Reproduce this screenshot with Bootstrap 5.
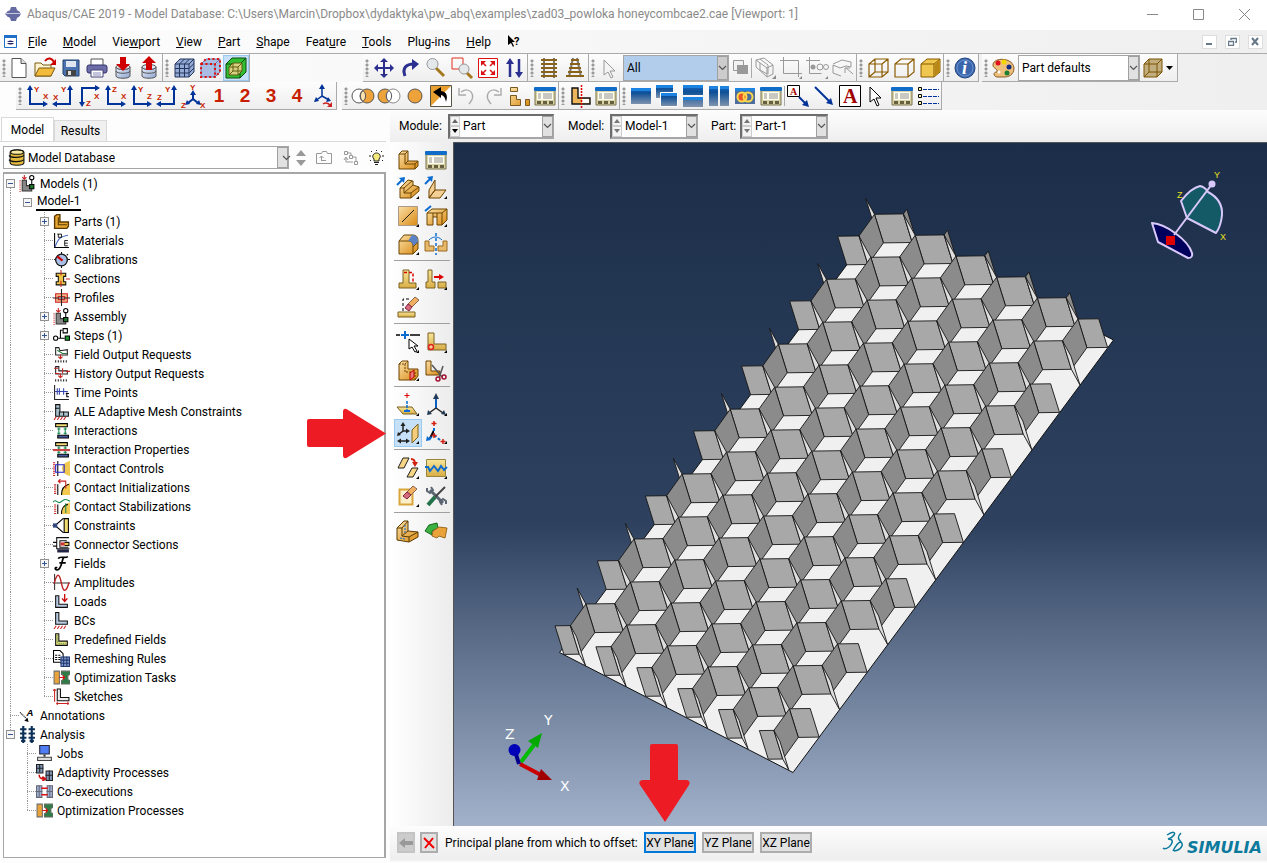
<!DOCTYPE html>
<html lang="en">
<head>
<meta charset="utf-8">
<meta name="viewport" content="width=device-width, initial-scale=1">
<title>Abaqus/CAE 2019</title>
<link rel="stylesheet" href="https://cdn.jsdelivr.net/npm/bootstrap@5.3.0/dist/css/bootstrap.min.css">
<style>
body{font:12px/16px Roboto,"Open Sans",sans-serif;color:#000;background:#fdfdfd;min-height:100vh}
button,select{font:inherit;color:inherit;padding:0;border-radius:0}
svg{display:block;flex:none}
.ui-title{height:30px;background:#fff;color:#8a8a8a;padding-bottom:2px}
.ui-title .cap{margin-left:-3px}
.ui-title button,.mdi button{border:0;background:none}
.win{width:46px;height:28px;display:grid;place-items:center}
.ui-menu{height:24px;background:linear-gradient(90deg,#fdfdfd,#efefef);border-bottom:1px solid #aaa}
.ui-menu .docicon{margin-right:11px}
.ui-menu a{color:#000;text-decoration:none}
.menus{gap:16px}
.mdi button{width:15px;height:14px;background:#fff;border:1px solid #ddd;display:grid;place-items:center}
.bars{background:linear-gradient(90deg,#fdfdfd,#efefef)}
.bar-row{height:28px}
.tgroup{height:28px;display:flex;align-items:center;border-right:1px solid #aaa;border-bottom:1px solid #aaa;background:linear-gradient(#fdfdfd,#eee);flex:none}
.gapl{margin-left:113px}
.gaps{margin-left:3px}
.gapm{margin-left:5px}
.grip{width:8px;height:18px;flex:none;background:radial-gradient(circle at 4px 2px,#999 1px,transparent 2px) 0 0/8px 4px}
.grip.thin{width:6px}
.tb{width:26px;height:26px;border:0;background:none;display:grid;place-items:center;flex:none}
.tb svg{width:24px;height:24px;overflow:visible}
.nar{width:22px}
.tb.on{background:#c6e0f7;outline:1px solid #99c9ef;outline-offset:-1px}
.num{font:bold 19px/24px "Liberation Sans",sans-serif;color:#c81e00}
.ax text{font:bold 8px "Liberation Sans",sans-serif;fill:#c81e00}
.vsep{width:1px;height:20px;background:#aaa;flex:none}
.pick{position:relative;display:flex;align-items:stretch;height:25px;background:#fff;border:2px solid #a6a6a6;border-right-width:1px}
.pick select{appearance:none;border:0;background:none;flex:1;min-width:0;outline:0;padding-left:3px}
.pick .drop{width:11px;background:#e1e1e1;border:1px solid #a0a0a0;display:grid;place-items:center;pointer-events:none}
.pick .spin{width:10px;display:flex;flex-direction:column}
.spin button{flex:1;border:1px solid #ccc;background:#f4f4f4;display:grid;place-items:center}
.inset{border-color:#6d6d6d #a6a6a6 #a6a6a6 #6d6d6d}
.pick.allpick{width:106px;background:#b1cdeb;height:26px;border-width:1px}
.allpick .drop{background:#ccc}
.pick.colpick{width:122px;margin-left:2px;height:26px;border-width:1px}
.pick.dbpick{width:286px;height:23px;border-width:1px}
.dbpick svg{width:17px}
.dbtools{padding:0 2px 0 7px}
.p1{width:106px}
.p2{width:88px}
.ml1{width:49px}
.ml2{width:42px;margin-left:14px}
.ml3{width:29px;margin-left:13px}
.side{width:386px;flex:none}
.tabs{padding:7px 0 0 1px}
.tabs button{border:1px solid #d9d9d9;border-bottom:0;background:#f0f0f0;height:21px;width:53px}
.tabs button.cur{background:#fff;height:24px}
.panel{border-top:1px solid #d9d9d9;padding:4px 0 0 3px}
.tree{border:1px solid #a6a6a6;border-width:2px 2px 1px 1px;background:#fff;margin:3px 0 5px}
.tree ul{list-style:none;margin:0;padding:0}
.tree li{height:19px;display:flex;align-items:center}
.tree li>svg{width:17px;height:17px;margin-right:4px;overflow:visible}
.c{width:17px;height:19px;flex:none;--lx:8px;display:flex;align-items:center;padding-left:4px;background-repeat:no-repeat}
.c:first-child{width:15px;--lx:6px;padding-left:2px}
.v{background-image:repeating-linear-gradient(#999 0 1px,transparent 1px 2px);background-size:1px 100%;background-position:var(--lx) 0}
.v.up{background-size:1px 10px}
.v.dn{background-size:1px 10px;background-position:var(--lx) 10px}
.k::after{content:"";height:1px;flex:1;margin-left:4px;background:repeating-linear-gradient(90deg,#999 0 1px,transparent 1px 2px)}
.pm{width:9px;height:9px;border:1px solid #919191;background:linear-gradient(#36548f,#36548f) 50% 50%/5px 1px no-repeat #f6f6f6}
.pm.plus{background:linear-gradient(#36548f,#36548f) 50% 50%/5px 1px no-repeat,linear-gradient(#36548f,#36548f) 50% 50%/1px 5px no-repeat,#f6f6f6}
.curmodel{border-bottom:2px solid #000;line-height:15px;padding:0 1px}
.work{min-width:0}
.modbar{height:32px;background:linear-gradient(#fdfdfd,#eee);padding-left:9px}
.toolbox{width:63px;flex:none;background:linear-gradient(90deg,#fff,#ececec);padding:4px 3px 0 4px}
.toolbox hr{margin:2px 0 4px;border:0;height:1px;background:#a0a0a0;opacity:1}
.toolbox .tb{width:28px;height:28px}
.view{background:linear-gradient(#1b2d48,#2e4260 56%,#a3b2cb);border-left:1px solid #555;border-top:1px solid #555;min-width:0}
.prompt{height:37px;background:linear-gradient(#fdfdfd,#eee 90%,#fff);padding:0 0 4px 7px}
.pb{height:21px;border:2px solid #adadad;background:#e1e1e1;line-height:16px;width:52px;white-space:nowrap;display:flex;align-items:center;justify-content:center}
.pb.on{border-color:#0078d7}
.pb.sq{width:18px}
.pb.dim{background:#ccc;border-color:#c4c4c4}
.pb.stop{margin:0 7px 0 5px}
.ptext{width:199px;white-space:nowrap}
.pbs{gap:6px}
.redarrow{position:absolute;left:307px;top:298px;z-index:2}
</style>
</head>
<body class="d-flex flex-column overflow-hidden">
<svg width="0" height="0" class="position-absolute" aria-hidden="true">
<defs>
<linearGradient id="or" x2="1" y2="1"><stop stop-color="#fbe0a8"/><stop offset="1" stop-color="#d98a12"/></linearGradient>
<linearGradient id="ye" x2="0" y2="1"><stop stop-color="#f7e69a"/><stop offset="1" stop-color="#d9ad45"/></linearGradient>
<linearGradient id="bw" x2="0" y2="1"><stop stop-color="#1f6fd0"/><stop offset=".3" stop-color="#0c4f96"/><stop offset="1" stop-color="#7f93ae"/></linearGradient>
<linearGradient id="gb" x2="1" y2="1"><stop stop-color="#e8eefa"/><stop offset="1" stop-color="#8fa6d0"/></linearGradient>
</defs>
<symbol id="new" viewBox="0 0 24 24"><path d="M5 2.500h9l5 5v14h-14z" fill="#fff" stroke="#555"/><path d="M14 2.500v5h5" fill="#ddd" stroke="#555"/></symbol>
<symbol id="open" viewBox="0 0 24 24"><path d="M2 20V7h6l2 2h8v11z" fill="#fff3d0" stroke="#7a5a10"/><path d="M2 20L6 12H22L18 20z" fill="#f3bb3c" stroke="#7a5a10"/><path d="M12 5c3-4 7-3 9 1" fill="none" stroke="#c00" stroke-width="2"/><path d="M23 3v6h-6z" fill="#c00"/></symbol>
<symbol id="save" viewBox="0 0 24 24"><path d="M4 4h16v16H6l-2-2z" fill="#4a72b0" stroke="#23406f"/><path d="M7 5h10v6H7z" fill="#dfe6f0"/><path d="M7 14h10v6H7z" fill="#444"/><path d="M9 15h3v4H9z" fill="#ddd"/></symbol>
<symbol id="print" viewBox="0 0 24 24"><path d="M6 3h12v7H6z" fill="#fff" stroke="#555"/><rect x="2" y="9" width="20" height="8" rx="2" fill="#6c6ca8" stroke="#33336b"/><path d="M6 14h12v7H6z" fill="#fff" stroke="#447"/><path d="M8 17h8M8 19h8" stroke="#88b"/></symbol>
<symbol id="db" viewBox="0 0 24 24"><path d="M5 11v9c0 3 14 3 14 0v-9" fill="url(#gb)" stroke="#555"/><path d="M5 15c0 3 14 3 14 0M5 11c0 3 14 3 14 0" fill="none" stroke="#555"/><ellipse cx="12" cy="11" rx="7" ry="2.500" fill="#dde5f2" stroke="#555"/></symbol>
<symbol id="dbd" viewBox="0 0 24 24"><use href="#db"/><path d="M9 1h6v7h4l-7 7-7-7h4z" fill="#d00000"/></symbol>
<symbol id="dbu" viewBox="0 0 24 24"><use href="#db"/><path d="M12 0l7 7h-4v7H9V7H5z" fill="#d00000"/></symbol>
<symbol id="mesh" viewBox="0 0 24 24"><path d="M3 8l5-5h14v13l-5 5H3z" fill="#93abd6" stroke="#24355c"/><path d="M3 8h14v13M17 8l5-5M7.500 8v13M12.500 8v13M3 12.500h14l5-5M3 17h14l5-5M7.500 8l5-5M12.500 8l5-5" stroke="#24355c" fill="none"/></symbol>
<symbol id="rcube" viewBox="0 0 24 24"><path d="M3 8l5-5h14v13l-5 5H3z" fill="#a9bce2" stroke="#6a7fae"/><path d="M3 8h14v13M17 8l5-5" stroke="#6a7fae" fill="none"/><path d="M3 8l5-5h14v13l-5 5H3zM3 8h14v13" stroke="#e01010" stroke-width="2" stroke-dasharray="2 2.500" fill="none"/></symbol>
<symbol id="gcube" viewBox="0 0 24 24"><path d="M2 8l6-6h14v14l-6 6H2z" fill="#2fbf30" stroke="#114a11"/><path d="M2 8h14v14M16 8l6-6" stroke="#114a11" fill="none"/><path d="M5 11l4-4h9v8l-4 4H5z" fill="#d8d080" stroke="#5d5d10"/><path d="M5 11h9v8M14 11l4-4M9 7v8h9M9 15l-4 4" stroke="#5d5d10" fill="none"/></symbol>
<symbol id="move" viewBox="0 0 24 24"><path d="M12 4v16M4 12h16" stroke="#2b2f8f" stroke-width="2"/><path d="M12 2l4 4H8zM12 22l4-4H8zM2 12l4-4v8zM22 12l-4-4v8z" fill="#2b2f8f"/></symbol>
<symbol id="rot" viewBox="0 0 24 24"><path d="M7 20c-3-8 1-12 9-12" fill="none" stroke="#2b2f8f" stroke-width="3"/><path d="M14 3l7 5-7 6z" fill="#2b2f8f"/></symbol>
<symbol id="mag" viewBox="0 0 24 24"><path d="M12 12l8 8" stroke="#a6781e" stroke-width="3"/><circle cx="8.500" cy="8" r="5.500" fill="#e4e8ea" stroke="#999"/></symbol>
<symbol id="magb" viewBox="0 0 24 24"><path d="M2 2h11v11H2z" fill="none" stroke="#e03020"/><path d="M16 16l6 6" stroke="#a6781e" stroke-width="3"/><circle cx="14" cy="13" r="5" fill="#e4e8ea" stroke="#999"/></symbol>
<symbol id="fit" viewBox="0 0 24 24"><path d="M2.500 2.500h19v19h-19z" fill="#fff" stroke="#d11"/><path d="M5 5h5L5 10zM19 5h-5l5 5zM5 19h5l-5-5zM19 19h-5l5-5z" fill="#d11"/><path d="M6 6l4 4M18 6l-4 4M6 18l4-4M18 18l-4-4" stroke="#d11" stroke-width="1.500"/></symbol>
<symbol id="ud" viewBox="0 0 24 24"><path d="M8 6v15M17 3v15" stroke="#2b2f8f" stroke-width="2.500"/><path d="M8 2l4 6H4zM17 22l4-6h-8z" fill="#2b2f8f"/></symbol>
<symbol id="lad" viewBox="0 0 24 24"><path d="M7 2v20M17 2v20" stroke="#777" stroke-width="2"/><path d="M4 4h16M4 8h16M4 12h16M4 16h16M4 20h16" stroke="#8a6218" stroke-width="2"/></symbol>
<symbol id="lad2" viewBox="0 0 24 24"><path d="M10 2L6 21M14 2l4 19" stroke="#777" stroke-width="2"/><path d="M8 4h8M7 8h10M6 12h12M5 16h14M3 20h18" stroke="#8a6218" stroke-width="2"/></symbol>
<symbol id="ptrg" viewBox="0 0 24 24"><path d="M6 4v15l4-3 3 6 2-1-3-6h5z" fill="#f5f5f5" stroke="#999"/></symbol>
<symbol id="ptr" viewBox="0 0 24 24"><path d="M6 3v15l4-3 3 7 2-1-3-7h5z" fill="#fff" stroke="#000"/></symbol>
<symbol id="cpy" viewBox="0 0 24 24"><path d="M4.500 4.500h10v10h-10z" fill="#f2f2f2" stroke="#999"/><path d="M8 9h11v9H8z" fill="#999"/></symbol>
<symbol id="gc" viewBox="0 0 24 24"><path d="M3 4l8-2 9 7v9l-6 3-11-10zM3 4l11 8v9M14 12l6-3M7 3l8 6v9M7 7v7l7 4" fill="none" stroke="#999"/><path d="M23 19v4h-4z" fill="#888"/></symbol>
<symbol id="gr" viewBox="0 0 24 24"><path d="M4 4.500h15.500V18M4.500 4v13.500h16M4.500 1v7M1 4.500h7M19.500 14v7M16 17.500h7" fill="none" stroke="#999"/><path d="M23 20v3h-3z" fill="#888"/></symbol>
<symbol id="gp" viewBox="0 0 24 24"><path d="M4 4.500h11M4.500 4v13.500h12M4.500 1v7M1 4.500h7" fill="none" stroke="#999"/><circle cx="8" cy="11" r="2.500" fill="#999"/><circle cx="15" cy="11" r="3" fill="none" stroke="#999"/><circle cx="21" cy="11" r="2.500" fill="none" stroke="#999"/><path d="M23 20v3h-3z" fill="#888"/></symbol>
<symbol id="gd" viewBox="0 0 24 24"><path d="M2 8l9-4 9 2v5l-5-1-6 2-7-3v8l8 3M22 18l-7-6M14 17v-5h5" fill="none" stroke="#999"/></symbol>
<symbol id="wc" viewBox="0 0 24 24"><path d="M3 8l6-5h13v13l-6 5H3zM3 8h13v13M16 8l6-5M9 3v13h13M9 16l-6 5" fill="none" stroke="#8a5a00" stroke-width="1.200"/></symbol>
<symbol id="hc" viewBox="0 0 24 24"><path d="M3 8l6-5h13v13l-6 5H3zM3 8h13v13M16 8l6-5" fill="none" stroke="#8a5a00" stroke-width="1.200"/></symbol>
<symbol id="sc" viewBox="0 0 24 24"><path d="M3 8l6-5h13v13l-6 5H3z" fill="#efc64e" stroke="#8a5a00"/><path d="M3 8h13v13M16 8l6-5" stroke="#8a5a00" fill="none"/><path d="M16.500 8.500L21.500 4v12l-5 4z" fill="#b98716"/></symbol>
<symbol id="oc" viewBox="0 0 24 24"><path d="M3 8l5-5h13v13l-5 5H3z" fill="#c2ad7e" stroke="#7a5200"/><path d="M3 8h13v13M16 8l5-5M8 3v13h13M8 16l-5 5" fill="none" stroke="#7a5200"/></symbol>
<symbol id="pal" viewBox="0 0 24 24"><path d="M2 9c0-8 20-8 21 3 0 7-6 9-9 9H6c-4-1-4-5 0-5 1-4-4-3-4-7z" fill="#eec07e" stroke="#8a5a20"/><circle cx="7" cy="7" r="2.500" fill="#e01020"/><circle cx="13" cy="6" r="2.500" fill="#f2d800"/><circle cx="18" cy="11" r="2.500" fill="#102a80"/><circle cx="16" cy="17" r="2.500" fill="#1c8030"/><circle cx="8" cy="16" r="1.500" fill="#fff"/></symbol>
<symbol id="L1" viewBox="0 0 24 24"><path d="M5 4v16h15" fill="none" stroke="#003399" stroke-width="2"/><path d="M5 1l3 5H2zM23 20l-5 3v-6z" fill="#003399"/></symbol>
<symbol id="L2" viewBox="0 0 24 24"><path d="M19 4v16H4" fill="none" stroke="#003399" stroke-width="2"/><path d="M19 1l3 5h-6zM1 20l5 3v-6z" fill="#003399"/></symbol>
<symbol id="L3" viewBox="0 0 24 24"><path d="M5 20V4h15" fill="none" stroke="#003399" stroke-width="2"/><path d="M5 23l3-5H2zM23 4l-5 3V1z" fill="#003399"/></symbol>
<symbol id="iso" viewBox="0 0 24 24"><path d="M12 9v6l-5 4M12 15l5 4" fill="none" stroke="#003399" stroke-width="2"/><path d="M12 6l3 5H9zM4 21l2-5 3 4zM20 21l-2-5-3 4z" fill="#003399"/></symbol>
<symbol id="bo1" viewBox="0 0 24 24"><circle cx="8" cy="12" r="7" fill="#fff" stroke="#555"/><circle cx="16" cy="12" r="7" fill="#eda23a" stroke="#555"/><path d="M12 6.500a7 7 0 0 1 0 11a7 7 0 0 1 0-11z" fill="#fbe3b0" stroke="#555"/></symbol>
<symbol id="bo2" viewBox="0 0 24 24"><circle cx="8" cy="12" r="7" fill="#eda23a" stroke="#555"/><circle cx="16" cy="12" r="7" fill="#fff" stroke="#888"/><path d="M12 6.500a7 7 0 0 1 0 11a7 7 0 0 1 0-11z" fill="#fff" stroke="#555"/></symbol>
<symbol id="bo3" viewBox="0 0 24 24"><circle cx="12" cy="12" r="7" fill="#eda23a" stroke="#555"/></symbol>
<symbol id="swap" viewBox="0 0 24 24"><path d="M1.500 1.500h21v21h-21z" fill="#fff" stroke="#554"/><path d="M2 2h20L2 22z" fill="#e9a031"/><path d="M4 8l8-5v4c6 1 7 5 5 11-1-5-3-7-5-7v3z" fill="#000"/></symbol>
<symbol id="undo" viewBox="0 0 24 24"><path d="M6 8c9-6 16 3 8 12" fill="none" stroke="#aaa" stroke-width="1.400"/><path d="M4 4v7h7" fill="none" stroke="#aaa" stroke-width="1.400"/></symbol>
<symbol id="redo" viewBox="0 0 24 24"><path d="M18 8C9 2 2 11 10 20" fill="none" stroke="#aaa" stroke-width="1.400"/><path d="M20 4v7h-7" fill="none" stroke="#aaa" stroke-width="1.400"/></symbol>
<symbol id="pcs" viewBox="0 0 24 24"><path d="M3.500 3.500h7v4h-7zM3.500 11.500h6v4h4v6h-10zM18.500 15.500h4v6h-4z" fill="url(#or)" stroke="#7a5a20"/></symbol>
<symbol id="mgr" viewBox="0 0 24 24"><path d="M2 6h20v15H2z" fill="#d9d2a4" stroke="#77724c"/><rect x="1" y="3" width="22" height="4" rx="1" fill="#0f6cc8"/><path d="M4 8h16v8H4z" fill="#fffff4"/><path d="M5 10h3M5 12h3M5 14h3M10 10h9M10 12h9M10 14h9" stroke="#777" stroke-width=".8"/><path d="M4 17h4v3H4zM10 17h4v3h-4zM16 17h4v3h-4z" fill="#666040"/></symbol>
<symbol id="cut" viewBox="0 0 24 24"><path d="M4 4h6v10h12v6H4z" fill="#eeb65c" stroke="#111" stroke-width="1.400"/><path d="M14 15h7v4h-7z" fill="#fff"/><path d="M13.500 1v23" stroke="#d00" stroke-width="1.500" stroke-dasharray="2 1"/></symbol>
<symbol id="w1" viewBox="0 0 24 24"><path d="M2 4h20v16H2z" fill="url(#bw)"/><path d="M2 4h20v3H2z" fill="#1d83e0"/></symbol>
<symbol id="w2" viewBox="0 0 24 24"><path d="M1 1h17v13H1z" fill="url(#bw)"/><path d="M1 1h17v3H1z" fill="#1d83e0"/><path d="M5.500 8.500h17v14h-17z" fill="url(#bw)" stroke="#fff"/><path d="M6 9h16v3H6z" fill="#1d83e0"/></symbol>
<symbol id="w3" viewBox="0 0 24 24"><path d="M2 1h20v10H2zM2 13h20v10H2z" fill="url(#bw)"/><path d="M2 1h20v3H2zM2 13h20v3H2z" fill="#1d83e0"/></symbol>
<symbol id="w4" viewBox="0 0 24 24"><path d="M2 2h9v20H2zM13 2h9v20h-9z" fill="url(#bw)"/><path d="M2 2h9v3H2zM13 2h9v3h-9z" fill="#1d83e0"/></symbol>
<symbol id="w5" viewBox="0 0 24 24"><path d="M2 4h20v16H2z" fill="#4d6d9c"/><path d="M2 4h20v3H2z" fill="#1d83e0"/><circle cx="9" cy="13" r="4.500" fill="#e8532a" stroke="#ffd94a" stroke-width="2"/><circle cx="15" cy="13" r="4.500" fill="none" stroke="#ffd94a" stroke-width="2"/></symbol>
<symbol id="ta" viewBox="0 0 24 24"><path d="M1.500 1.500h12v11h-12z" fill="#fff" stroke="#000"/><path d="M13 13l7 7" stroke="#003399" stroke-width="2"/><path d="M23 23l-7-2 5-5z" fill="#003399"/></symbol>
<symbol id="da" viewBox="0 0 24 24"><path d="M3 3l15 15" stroke="#003399" stroke-width="2"/><path d="M21 21l-7-2 5-5z" fill="#003399"/></symbol>
<symbol id="leg" viewBox="0 0 24 24"><path d="M2.500 3.500h3v3h-3zM2.500 10.500h3v3h-3zM2.500 17.500h3v3h-3z" fill="#ffa" stroke="#000"/><path d="M7 5.500h16M7 12.500h16M7 19.500h16" stroke="#003399" stroke-dasharray="4 1"/></symbol>
<symbol id="tri" viewBox="0 0 24 24"><path d="M23 20v3h-3z" fill="#000"/></symbol>
<symbol id="part" viewBox="0 0 24 24"><path d="M3 6l3-3h6v10h10v5l-3 3H3z" fill="url(#or)" stroke="#6d4500"/><path d="M3 6h6v10h10v5M9 6l3-3M9 16l3-3M19 16l3-3" fill="none" stroke="#6d4500"/></symbol>
<symbol id="extr" viewBox="0 0 24 24"><path d="M4 12l8-8 5 1v4l6 2v4l-8 7H4z" fill="url(#or)" stroke="#6d4500"/><path d="M4 12h4v5h7v5M8 12l8-7M8 17l9-8M15 17l8-6" fill="none" stroke="#6d4500"/><path d="M1 9l6-6" stroke="#0a6bd0" stroke-width="2"/><path d="M9 1l-1 6-5-5z" fill="#0a6bd0"/></symbol>
<symbol id="shel" viewBox="0 0 24 24"><path d="M5 14l6-10v10l-6 8zM11 14h11l-6 8H5z" fill="#f4cf95" stroke="#6d4500"/><path d="M1 8l6-6" stroke="#0a6bd0" stroke-width="2"/><path d="M9 0l-1 6-5-5z" fill="#0a6bd0"/></symbol>
<symbol id="wire" viewBox="0 0 24 24"><path d="M2.500 2.500h19v19h-19z" fill="url(#or)" stroke="#a98"/><path d="M6 18L18 6" stroke="#222"/></symbol>
<symbol id="pock" viewBox="0 0 24 24"><path d="M3 9l5-4h15v11l-5 5h-5v-8H9v8H3z" fill="url(#or)" stroke="#6d4500"/><path d="M3 9h15v12M18 9l5-4M9 13v-4M13 13v-4" fill="none" stroke="#6d4500"/><path d="M1 7l6-5" stroke="#0a6bd0" stroke-width="2"/></symbol>
<symbol id="rnd" viewBox="0 0 24 24"><path d="M3 9l5-6h9c4 0 5 3 5 6v8l-5 5H3z" fill="url(#or)" stroke="#6d4500"/><path d="M3 9h10c3 0 4 3 4 6v7M17 15l5-5" fill="none" stroke="#6d4500"/><path d="M12 9l4-6c5 0 6 3 6 7l-5 4c0-3-2-5-5-5z" fill="#5b82c6"/></symbol>
<symbol id="mirr" viewBox="0 0 24 24"><path d="M1 9h4v5h5v5H1zM23 9h-4v5h-5v5h9z" fill="#e8b96b" stroke="#9a6a20"/><path d="M12 1v22" stroke="#0a6bd0" stroke-width="1.500" stroke-dasharray="3 2"/><path d="M5 8c4-4 9-4 13 0" fill="none" stroke="#0a6bd0"/></symbol>
<symbol id="rib" viewBox="0 0 24 24"><path d="M7 3h6v13h7v5H3v-5h4z" fill="url(#ye)" stroke="#7a6020"/><path d="M8 5.500h9v10" fill="none" stroke="#d00" stroke-width="1.500" stroke-dasharray="3 2"/></symbol>
<symbol id="rib2" viewBox="0 0 24 24"><path d="M4 3h4v12h3v6H2v-6h2zM14 15h8v6h-8z" fill="url(#ye)" stroke="#7a6020"/><path d="M10 10h7" stroke="#d00" stroke-width="2"/><path d="M20 10l-5-3v6z" fill="#d00"/></symbol>
<symbol id="eras" viewBox="0 0 24 24"><path d="M2 17h17v5H2z" fill="url(#ye)" stroke="#7a6020"/><path d="M7 16V4h8" fill="none" stroke="#000" stroke-dasharray="3 2"/><path d="M19 2l4 3-7 7-4-3z" fill="#f0b060" stroke="#865"/><path d="M12 9l4 3-3 4-4-3z" fill="#d46c7c" stroke="#824"/></symbol>
<symbol id="dp" viewBox="0 0 24 24"><path d="M0 5h4M14 5h10" stroke="#000" stroke-width="1.500"/><path d="M9 1v8M5 5h8" stroke="#0a6bd0" stroke-width="2"/><path d="M13 9v10l3-2 3 5 2-1-3-5h4z" fill="#fff" stroke="#000"/></symbol>
<symbol id="lfac" viewBox="0 0 24 24"><path d="M4 3h6v11h12v6H4z" fill="url(#ye)" stroke="#7a6020"/><circle cx="7" cy="17" r="2.500" fill="#f9d090" stroke="#d22" stroke-width="1.500"/></symbol>
<symbol id="cell" viewBox="0 0 24 24"><path d="M3 6l3-3h6v8h10v7l-3 4H3z" fill="url(#or)" stroke="#6d4500"/><path d="M3 6h6v8h10v8M9 6l3-3" fill="none" stroke="#6d4500" stroke-dasharray="2 1"/><path d="M14 15l4-3v7l-4 3z" fill="#e77" stroke="#b00"/></symbol>
<symbol id="scis" viewBox="0 0 24 24"><path d="M2 3h5v10h9v4H2z" fill="url(#or)" stroke="#6d4500"/><path d="M8 7l10 12M19 8l-4 12" stroke="#555" stroke-width="1.500"/><circle cx="14" cy="21" r="2" fill="none" stroke="#a01030" stroke-width="1.500"/><circle cx="20" cy="19" r="2" fill="none" stroke="#a01030" stroke-width="1.500"/></symbol>
<symbol id="dpl" viewBox="0 0 24 24"><path d="M1 14h15l5 7H7z" fill="url(#ye)" stroke="#7a6020"/><path d="M11 8v11" stroke="#0a6bd0" stroke-dasharray="3 1" stroke-width="1.500"/><path d="M11 0v5M8.500 2.500h5" stroke="#d00"/><path d="M8 18h6" stroke="#0a6bd0" stroke-width="2"/></symbol>
<symbol id="dax" viewBox="0 0 24 24"><path d="M12 3v12" stroke="#0a5fc0" stroke-width="2"/><path d="M12 15l-7 5M12 15l7 5" stroke="#222" stroke-width="1.500"/><path d="M12 0l3 6H9zM3 22l1-5 4 4zM22 22l-5-1 3-4z" fill="#223a55"/></symbol>
<symbol id="dof" viewBox="0 0 24 24"><path d="M7 4v6l-4 3M7 10h4M4 20h6" stroke="#222" stroke-width="1.500" fill="none"/><path d="M7 1l2.500 4h-5zM14 10l-4 2.500v-5zM1 15l1-4 3 3zM14 20l-4 2.500v-5zM1 20l4 2.500v-5z" fill="#222"/><path d="M16 9l6-6v13l-6 6z" fill="#f6cd78" stroke="#7a6020"/></symbol>
<symbol id="dcs" viewBox="0 0 24 24"><path d="M10 7v7l-6 5M10 14l6 5" stroke="#0a6bd0" stroke-width="2" stroke-dasharray="3 2"/><path d="M10 0v5M7.500 2.500h5M10 12v5M7.500 14.500h5M19 18v5M16.500 20.500h5" stroke="#d21f10" stroke-width="1.500"/><path d="M2 20l1-5 4 4z" fill="#0a6bd0"/></symbol>
<symbol id="pat" viewBox="0 0 24 24"><path d="M2 12L7 2h6L8 12zM11 21l5-9h6l-5 9z" fill="#f6d584" stroke="#222"/><path d="M15 3c3 0 4 2 4 5" fill="none" stroke="#d21f10" stroke-width="2"/><path d="M19 11l-3-5h6z" fill="#d21f10"/></symbol>
<symbol id="wav" viewBox="0 0 24 24"><path d="M2.500 3.500h19v17h-19z" fill="url(#ye)" stroke="#97853c"/><path d="M1 11h3l2 4 4-5 4 5 3-5 3 4 3-3" fill="none" stroke="#0a6bd0" stroke-width="2"/></symbol>
<symbol id="ers2" viewBox="0 0 24 24"><path d="M3.500 5.500h13v15h-13z" fill="#fbeec8" stroke="#d9a53a" stroke-width="2"/><path d="M17 2l4 3-6 6-4-3z" fill="#f0b060" stroke="#865"/><path d="M11 8l4 3-4 4-4-3z" fill="#d46c7c" stroke="#824"/></symbol>
<symbol id="tls" viewBox="0 0 24 24"><path d="M6 6l13 13" stroke="#5a6672" stroke-width="3"/><path d="M3 4v3l3 2 3-3-2-3M22 20v-3l-3-2-3 3 2 3" fill="none" stroke="#5a6672" stroke-width="2"/><path d="M21 3L11 13" stroke="#444" stroke-width="2"/><path d="M11 13l-7 8" stroke="#23724a" stroke-width="4"/></symbol>
<symbol id="pt2" viewBox="0 0 24 24"><path d="M1 9l7-7h4v10l10 1v5l-9 5-12-2z" fill="url(#or)" stroke="#5a3a00"/><path d="M1 9h5l6-7M6 9v8l7 1v5M6 17l6-5M13 18l9-5" fill="none" stroke="#5a3a00"/><path d="M9 6v9M4 19l5 1" stroke="#0a6bd0" stroke-dasharray="2 1" fill="none"/></symbol>
<symbol id="gpt" viewBox="0 0 24 24"><path d="M1 12l4-6 8-2 1 5-6 3v4z" fill="#3cb040" stroke="#14651a"/><path d="M9 12l6-4 8 1-2 10-6-2-2 2-5-2z" fill="#eaa33a" stroke="#9a6a20"/></symbol>
<symbol id="t-mod" viewBox="0 0 16 16"><path d="M3 5h4v5h5v5H3z" fill="#888" stroke="#333"/><path d="M1 5v11" stroke="#c22" stroke-dasharray="1 1"/><path d="M5 0v4M3 2l2 2 2-2" stroke="#c22" fill="none"/><circle cx="12" cy="2.500" r="2" fill="#fff" stroke="#000"/><path d="M12 4v6" stroke="#000"/><path d="M10 9h4v4h-4z" fill="#1c7a2c" stroke="#000"/></symbol>
<symbol id="t-part" viewBox="0 0 16 16"><path d="M1.500 3l2-1.500h3v7h8v4L13 14.500H1.500z" fill="#e5a531" stroke="#5a3a00" stroke-width="1.300"/><path d="M5 4v7h8" stroke="#5a3a00" fill="none"/></symbol>
<symbol id="t-mat" viewBox="0 0 16 16"><path d="M1.500 1v13.500H15" stroke="#000" fill="none"/><path d="M2 14C5 5 8 4 14 3" stroke="#3a5fc0" fill="none"/><path d="M4 2h4M5 2v3h3v-3M14 8h-3v5h3M11 10.500h3" stroke="#000" stroke-width=".8" fill="none"/></symbol>
<symbol id="t-cal" viewBox="0 0 16 16"><circle cx="8" cy="8.500" r="5.500" fill="#a9bfe6" stroke="#111" stroke-width="1.200"/><path d="M4 5l5 4" stroke="#c00" stroke-width="2"/><path d="M8 1v2M14 3l-1 1M1 8h1M14 8h2M8 14v2" stroke="#111"/></symbol>
<symbol id="t-sec" viewBox="0 0 16 16"><path d="M3 3h9v3h-2v5h2v3H3v-3h2V6H3z" fill="#ecc344" stroke="#111"/><path d="M7.500 0v5M12 8.500h4M7.500 10v6" stroke="#c22"/></symbol>
<symbol id="t-pro" viewBox="0 0 16 16"><path d="M2.500 4.500h11v8h-11z" fill="#f2b98a" stroke="#c22"/><path d="M5 7h6v3H5z" fill="#fff" stroke="#c22"/><path d="M8 0v16M0 8.500h16" stroke="#222"/></symbol>
<symbol id="t-stp" viewBox="0 0 16 16"><circle cx="2.500" cy="10.500" r="2" fill="#fff" stroke="#000"/><path d="M5 10.500h2V3h2M7 10.500h4" stroke="#000" fill="none"/><path d="M9.500 1.500h4v4h-4z" fill="#fff" stroke="#000"/><path d="M11.500 8.500h4v4h-4z" fill="#1c9a2c" stroke="#000"/></symbol>
<symbol id="t-fld" viewBox="0 0 16 16"><path d="M2.500 1.500h3l1 3 7-1v5h-11z" fill="#fff" stroke="#222"/><path d="M4 4l5 3h4" stroke="#2a7a40" fill="none"/><path d="M7 8v3M5 10l2 2 2-2" stroke="#c22" fill="none"/><path d="M2 14.500h12" stroke="#222" stroke-width="2" stroke-dasharray="1 1.500"/></symbol>
<symbol id="t-his" viewBox="0 0 16 16"><path d="M2.500 1.500h3v4h8v3h-11z" fill="#fff" stroke="#222"/><path d="M1 3h4M9 3v5M12 6h4M7 8v3M5 10l2 2 2-2M2 8h4" stroke="#c22" fill="none"/><path d="M2 14.500h12" stroke="#222" stroke-width="2" stroke-dasharray="1 1.500"/></symbol>
<symbol id="t-tim" viewBox="0 0 16 16"><path d="M1.500 1v13.500H15" stroke="#222" fill="none"/><path d="M2 7h12M4 4v6M6 4v6M10 4v6" stroke="#3344aa"/><path d="M13 8v4h2M12 9h3" stroke="#000" fill="none"/></symbol>
<symbol id="t-ale" viewBox="0 0 16 16"><path d="M2.500 1.500h4v7h8v4h-12z" fill="#a9c3cf" stroke="#111"/><path d="M2 5h4M6 8v4M10 8v4" stroke="#111"/><path d="M3 13l-2 3M6 13l-2 3M9 13l-2 3M12 13l-2 3" stroke="#c22"/></symbol>
<symbol id="t-int" viewBox="0 0 16 16"><path d="M2.500 1.500h11v3h-11z" fill="#f3dd77" stroke="#000"/><path d="M4.500 12.500h10v2.500h-10z" fill="#4a5aa0" stroke="#000"/><path d="M5.500 5v7M11.500 5v7M4 6.500h3M10 6.500h3M4 10.500h3M10 10.500h3" stroke="#138a4a"/></symbol>
<symbol id="t-inp" viewBox="0 0 16 16"><use href="#t-int"/><path d="M0 8.500h16" stroke="#c44" stroke-width="2"/></symbol>
<symbol id="t-cc" viewBox="0 0 16 16"><path d="M1 2v13" stroke="#c22" stroke-width="2" stroke-dasharray="1 1"/><path d="M4.500 1v14" stroke="#000"/><path d="M16 1c-10 2-10 12 0 14z" fill="#f1c950"/><path d="M2.500 4.500h8v7h-8z" fill="none" stroke="#22c"/></symbol>
<symbol id="t-ci" viewBox="0 0 16 16"><path d="M2 5v10" stroke="#c22" stroke-width="2" stroke-dasharray="1 1"/><path d="M4.500 5v10" stroke="#000"/><path d="M16 4c-6 2-8 6-8 11h8z" fill="#f1c950"/><path d="M8 15c0-6 3-9 7-10" stroke="#000" fill="none"/><path d="M12 9V2H5M7 0L5 2l2 2" stroke="#c22" fill="none"/></symbol>
<symbol id="t-cs" viewBox="0 0 16 16"><path d="M2 6v9" stroke="#c22" stroke-width="2" stroke-dasharray="1 1"/><path d="M4.500 6v9" stroke="#000"/><path d="M16 4c-6 2-8 6-8 11h8z" fill="#f1c950"/><path d="M8 15c0-6 2-8 6-9" stroke="#000" fill="none"/><path d="M0 4c3-4 4 2 7 0s4-4 9-1M12 5v9" stroke="#138a4a" fill="none"/></symbol>
<symbol id="t-con" viewBox="0 0 16 16"><path d="M10.500 1.500h4v13h-4z" fill="#f1dc70" stroke="#000"/><path d="M2 8l8-7M2 8l8 7" stroke="#000"/><path d="M0 6h4v4H0z" fill="#334a80"/></symbol>
<symbol id="t-cns" viewBox="0 0 16 16"><path d="M15 1.500H3.500V6H0M3.500 6v6h12M0 9.500h3M13 4.500H6.500v6h8" stroke="#111" fill="none"/><path d="M7 6h5v3H7z" fill="#c33"/><path d="M11 6h4v3h-4" fill="#ecc344" stroke="#111"/><path d="M4 14h11" stroke="#224" stroke-width="3"/></symbol>
<symbol id="t-f" viewBox="0 0 16 16"><path d="M5 3.500c1-3 6 0 9-2M10 2C8 6 8 14 4 14c-3 0-2-3 0-2M6 7.500h6" stroke="#000" stroke-width="1.600" fill="none"/></symbol>
<symbol id="t-amp" viewBox="0 0 16 16"><path d="M1.500 0v15M0 8.500h16" stroke="#333"/><path d="M1 9c3-11 5-10 7 0s5 7 7-1" stroke="#b22" stroke-width="1.300" fill="none"/></symbol>
<symbol id="t-L" viewBox="0 0 16 16"><path d="M2.500 2.500h3v8h8v3h-11z" fill="#b8cbe2" stroke="#111"/></symbol>
<symbol id="t-ld" viewBox="0 0 16 16"><use href="#t-L"/><path d="M11 1v6M8.500 5L11 8l2.500-3" stroke="#c00" fill="none" stroke-width="1.200"/></symbol>
<symbol id="t-bc" viewBox="0 0 16 16"><path d="M2.500.5h3v8h8v3h-11z" fill="#b8cbe2" stroke="#111"/><path d="M3 13l-2 3M6 13l-2 3M9 13l-2 3M12 13l-2 3" stroke="#c22"/></symbol>
<symbol id="t-pf" viewBox="0 0 16 16"><path d="M2.500 2.500h3v7h8v4h-11z" fill="#ecdf80" stroke="#111"/><path d="M4 4v6l2 2h6" stroke="#2a8a40" fill="none" stroke-dasharray="1 1"/></symbol>
<symbol id="t-rm" viewBox="0 0 16 16"><path d="M.5.5h6l3 3v8h-9z" fill="#fff" stroke="#000"/><path d="M2 5h5M2 7h5M2 9h5" stroke="#000" stroke-dasharray="2 1"/><path d="M7.500 6.500h8v9h-8z" fill="#7f97c9" stroke="#223a70"/><path d="M10 6v9M13 6v9M7 9.500h8M7 12.500h8" stroke="#223a70"/></symbol>
<symbol id="t-opt" viewBox="0 0 16 16"><path d="M1 2h5v12H1z" fill="#eaa33a" stroke="#6d6d6d"/><path d="M8 2h8v3l-2 1v4l2 1v3H8v-3l2-1V6L8 5z" fill="#2f7d46" stroke="#5d6d5d"/><path d="M6 8h5M9 6l2 2-2 2" stroke="#d11" fill="none"/></symbol>
<symbol id="t-sk" viewBox="0 0 16 16"><path d="M4 1h3v8h8v3H4z" fill="#eee" stroke="#111"/><path d="M1.500 1v12M0 2h3M3 14.500h12M4 13v3M14 13v3" stroke="#c22"/></symbol>
<symbol id="t-ann" viewBox="0 0 16 16"><path d="M1 5l6 6" stroke="#000" stroke-dasharray="1 .6"/><path d="M9 14l-4-1 3-3z" fill="#000"/></symbol>
<symbol id="t-ana" viewBox="0 0 16 16"><path d="M4 0v16M12 0v16" stroke="#0b2f57" stroke-width="2"/><path d="M1 3h6M1 7h6M1 11h6M9 3h6M9 7h6M9 11h6M2 14h4M10 14h4" stroke="#0b2f57" stroke-width="2"/></symbol>
<symbol id="t-job" viewBox="0 0 16 16"><path d="M3.500.5h9v8h-9z" fill="#4d7df0" stroke="#223"/><path d="M7 9h2v2H7z" fill="#333"/><path d="M1.500 11.500h13v3h-13z" fill="#ddd" stroke="#444"/></symbol>
<symbol id="t-adp" viewBox="0 0 16 16"><path d="M.5.5h6v8h-6zM9.500 6.500h6v9h-6z" fill="#7f97b9" stroke="#222"/><path d="M3.500 0v8M0 4h7M12.500 6v9M9 10.500h6" stroke="#222"/><path d="M3 10c0 3 1 4 5 4M6 12l3 2-3 2" stroke="#c11" fill="none" stroke-width="1.500"/></symbol>
<symbol id="t-coe" viewBox="0 0 16 16"><path d="M.5 2.500h5v11h-5zM10.500 2.500h5v11h-5z" fill="#9fb3d6" stroke="#667"/><path d="M3 2v11M0 8h6M13 2v11M10 8h6" stroke="#667"/><path d="M5 5h6M5 11h6" stroke="#d11" stroke-width="1.500"/></symbol>
<symbol id="t-db" viewBox="0 0 16 16"><path d="M2 3c0-3 13-3 13 0v10c0 3-13 3-13 0z" fill="#e2b93a" stroke="#111"/><path d="M1 6c2 3 12 2 14 0M1 10c2 3 12 2 14 0" stroke="#111" stroke-width="1.300" fill="none"/><ellipse cx="8.500" cy="3" rx="6" ry="2" fill="#f8e9a0" stroke="#111"/></symbol>
<symbol id="ch" viewBox="0 0 9 6"><path d="M1 1l3.500 3.500L8 1" stroke="#555" fill="none" stroke-width="1.200"/></symbol>
<symbol id="up" viewBox="0 0 6 4"><path d="M3 0l3 4H0z"/></symbol>
<symbol id="dw" viewBox="0 0 6 4"><path d="M3 4l3-4H0z"/></symbol>
</svg>

<header class="ui-title d-flex align-items-center">
  <svg class="ms-1 me-2" width="18" height="18" viewBox="0 0 18 18"><path d="M6 5l1-3h5l1 3 3 2v4l-3 2-1 3H7l-1-3-3-2V7z" fill="#666aa2"/><path d="M1 9l3-3h10l3 3-3 3H4z" fill="#666aa2"/><path d="M2 8.500h14" stroke="#c5c8e0"/></svg>
  <span class="cap flex-fill text-truncate">Abaqus/CAE 2019 - Model Database: C:\Users\Marcin\Dropbox\dydaktyka\pw_abq\examples\zad03_powloka honeycombcae2.cae [Viewport: 1]</span>
  <button class="win" aria-label="Minimize"><svg width="11" height="11"><path d="M0 5.500h11" stroke="#888"/></svg></button>
  <button class="win" aria-label="Maximize"><svg width="11" height="11"><path d="M.5.5h10v10H.5z" fill="none" stroke="#888"/></svg></button>
  <button class="win" aria-label="Close"><svg width="11" height="11"><path d="M0 0l11 11M11 0L0 11" stroke="#888"/></svg></button>
</header>

<nav class="ui-menu d-flex align-items-center">
  <svg class="ms-1 docicon" width="13" height="13"><path d="M.5.5h12v12H.5z" fill="#fff" stroke="#1d6fc8"/><path d="M0 0h13v3H0z" fill="#1d6fc8"/><path d="M3 7a4 3 0 0 1 7 0zM3 8a4 3 0 0 0 7 0z" fill="#23246e"/></svg>
  <div class="menus d-flex flex-fill">
    <a href="#"><u>F</u>ile</a><a href="#"><u>M</u>odel</a><a href="#">Vie<u>w</u>port</a><a href="#"><u>V</u>iew</a><a href="#"><u>P</u>art</a><a href="#"><u>S</u>hape</a><a href="#">Feat<u>u</u>re</a><a href="#"><u>T</u>ools</a><a href="#">Plug-ins</a><a href="#"><u>H</u>elp</a>
    <a href="#" aria-label="Context help"><svg width="14" height="14"><path d="M1 1v10l3-2 2 4 1-1-2-4h3z"/><text x="7" y="11" font-size="11" font-weight="bold">?</text></svg></a>
  </div>
  <div class="mdi d-flex gap-2 me-1"><button aria-label="Minimize viewport"><svg width="9" height="9"><path d="M1 7h6" stroke="#678" stroke-width="2"/></svg></button><button aria-label="Restore viewport"><svg width="9" height="9"><path d="M3 3V1.500h5.500V5H7M.5 4.500h5v4h-5z" stroke="#678" stroke-width="1.300" fill="none"/></svg></button><button aria-label="Close viewport"><svg width="9" height="9"><path d="M1 1l6 7M7 1L1 8" stroke="#678" stroke-width="2"/></svg></button></div>
</nav>

<div class="bars">
<div class="bar-row d-flex">
  <div class="tgroup"><span class="grip thin"></span>
    <button class="tb" aria-label="New"><svg><use href="#new"/></svg></button><button class="tb" aria-label="Open"><svg><use href="#open"/></svg></button><button class="tb" aria-label="Save"><svg><use href="#save"/></svg></button><button class="tb" aria-label="Print"><svg><use href="#print"/></svg></button><button class="tb" aria-label="Session in"><svg><use href="#dbd"/></svg></button><button class="tb" aria-label="Session out"><svg><use href="#dbu"/></svg></button></div>
  <div class="tgroup"><span class="grip"></span>
    <button class="tb" aria-label="Mesh"><svg><use href="#mesh"/></svg></button><button class="tb" aria-label="Seeds"><svg><use href="#rcube"/></svg></button><button class="tb on" aria-label="Native geometry"><svg><use href="#gcube"/></svg></button></div>
  <div class="tgroup gapl"><span class="grip"></span>
    <button class="tb" aria-label="Pan"><svg><use href="#move"/></svg></button><button class="tb" aria-label="Rotate"><svg><use href="#rot"/></svg></button><button class="tb" aria-label="Magnify"><svg><use href="#mag"/></svg></button><button class="tb" aria-label="Box zoom"><svg><use href="#magb"/></svg></button><button class="tb" aria-label="Fit"><svg><use href="#fit"/></svg></button><button class="tb" aria-label="Cycle"><svg><use href="#ud"/></svg></button></div>
  <div class="tgroup"><span class="grip"></span>
    <button class="tb" aria-label="Parallel"><svg><use href="#lad"/></svg></button><button class="tb" aria-label="Perspective"><svg><use href="#lad2"/></svg></button></div>
  <div class="tgroup"><span class="grip"></span>
    <button class="tb" aria-label="Select"><svg><use href="#ptrg"/></svg></button>
    <div class="pick allpick"><select aria-label="Selection filter"><option>All</option></select><span class="drop"><svg width="9" height="6"><use href="#ch"/></svg></span></div>
    <button class="tb nar" aria-label="Groups"><svg><use href="#cpy"/></svg></button><span class="vsep"></span>
    <button class="tb" aria-label="Select inside"><svg><use href="#gc"/></svg></button><button class="tb" aria-label="Drag shape"><svg><use href="#gr"/></svg></button><button class="tb" aria-label="Drag scope"><svg><use href="#gp"/></svg></button><button class="tb" aria-label="Nearest"><svg><use href="#gd"/></svg></button></div>
  <div class="tgroup"><span class="grip"></span>
    <button class="tb" aria-label="Wireframe"><svg><use href="#wc"/></svg></button><button class="tb" aria-label="Hidden"><svg><use href="#hc"/></svg></button><button class="tb" aria-label="Shaded"><svg><use href="#sc"/></svg></button></div>
  <div class="tgroup"><span class="grip"></span><button class="tb" aria-label="Query"><svg viewBox="0 0 24 24"><circle cx="12" cy="12" r="10" fill="#3a66ad" stroke="#24467f"/><circle cx="12" cy="12" r="8" fill="none" stroke="#6f93cc"/><text x="9" y="18" font-family="Liberation Serif,serif" font-style="italic" font-weight="bold" font-size="18" fill="#fff">i</text></svg></button></div>
  <div class="tgroup gaps"><span class="grip"></span><button class="tb" aria-label="Colors"><svg><use href="#pal"/></svg></button>
    <div class="pick colpick"><select aria-label="Color mapping"><option>Part defaults</option></select><span class="drop"><svg width="9" height="6"><use href="#ch"/></svg></span></div>
    <button class="tb" aria-label="Translucency"><svg><use href="#oc"/></svg></button><svg class="me-1" width="7" height="4"><path d="M0 0h7L3.500 4z"/></svg></div>
</div>
<div class="bar-row d-flex ps-3">
  <div class="tgroup"><span class="grip"></span>
    <button class="tb" aria-label="Front"><svg viewBox="0 0 24 24"><use href="#L1"/><g class="ax"><text x="9" y="8">Y</text><text x="18" y="15">X</text></g></svg></button>
    <button class="tb" aria-label="Back"><svg viewBox="0 0 24 24"><use href="#L2"/><g class="ax"><text x="10" y="8">Y</text><text x="2" y="16">X</text></g></svg></button>
    <button class="tb" aria-label="Top"><svg viewBox="0 0 24 24"><use href="#L3"/><g class="ax"><text x="17" y="15">X</text><text x="9" y="22">Z</text></g></svg></button>
    <button class="tb" aria-label="Bottom"><svg viewBox="0 0 24 24"><use href="#L1"/><g class="ax"><text x="9" y="8">Z</text><text x="18" y="15">X</text></g></svg></button>
    <button class="tb" aria-label="Left"><svg viewBox="0 0 24 24"><use href="#L1"/><g class="ax"><text x="9" y="8">Y</text><text x="18" y="15">Z</text></g></svg></button>
    <button class="tb" aria-label="Right"><svg viewBox="0 0 24 24"><use href="#L2"/><g class="ax"><text x="10" y="8">Y</text><text x="2" y="16">Z</text></g></svg></button>
    <button class="tb" aria-label="Iso"><svg viewBox="0 0 24 24"><use href="#iso"/><g class="ax"><text x="9" y="6">Y</text><text x="0" y="24">Z</text><text x="19" y="24">X</text></g></svg></button>
    <button class="tb num">1</button><button class="tb num">2</button><button class="tb num">3</button><button class="tb num">4</button>
    <button class="tb" aria-label="Manipulate view"><svg viewBox="0 0 24 24"><path d="M11 3v9l-7 5M11 12l7 4" fill="none" stroke="#039" stroke-width="1.500"/><path d="M11 0l3 5H8zM3 18l2-5 3 4zM20 17l-5 1 2-5z" fill="#039"/><path d="M12 20c3-2 5-1 7 1" fill="none" stroke="#c22" stroke-width="1.500"/><path d="M21 18v5h-5z" fill="#c22"/></svg></button></div>
  <div class="tgroup gapm"><span class="grip"></span>
    <button class="tb" aria-label="Replace"><svg><use href="#bo1"/></svg></button><button class="tb" aria-label="Remove"><svg><use href="#bo2"/></svg></button><button class="tb" aria-label="Intersect"><svg><use href="#bo3"/></svg></button><button class="tb" aria-label="Swap"><svg><use href="#swap"/></svg></button><button class="tb" aria-label="Undo"><svg><use href="#undo"/></svg></button><button class="tb" aria-label="Redo"><svg><use href="#redo"/></svg></button><button class="tb" aria-label="Display group"><svg><use href="#pcs"/></svg></button><button class="tb" aria-label="Group manager"><svg><use href="#mgr"/></svg></button></div>
  <div class="tgroup"><span class="grip"></span><button class="tb" aria-label="View cut"><svg><use href="#cut"/></svg></button><button class="tb" aria-label="View cut manager"><svg><use href="#mgr"/></svg></button></div>
  <div class="tgroup"><span class="grip"></span>
    <button class="tb" aria-label="Viewport"><svg><use href="#w1"/></svg></button><button class="tb" aria-label="Cascade"><svg><use href="#w2"/></svg></button><button class="tb" aria-label="Tile rows"><svg><use href="#w3"/></svg></button><button class="tb" aria-label="Tile columns"><svg><use href="#w4"/></svg></button><button class="tb" aria-label="Link"><svg><use href="#w5"/></svg></button><button class="tb" aria-label="Link manager"><svg><use href="#mgr"/></svg></button><span class="vsep"></span>
    <button class="tb" aria-label="Annotate"><svg viewBox="0 0 24 24"><use href="#ta"/><text x="4" y="11" font-family="Liberation Serif,serif" font-weight="bold" font-size="10" fill="#a00">A</text></svg></button><button class="tb" aria-label="Arrow"><svg><use href="#da"/></svg></button><button class="tb" aria-label="Text"><svg viewBox="0 0 24 24"><path d="M1.500 1.500h21v21h-21z" fill="#fff" stroke="#000"/><text x="5" y="19" font-family="Liberation Serif,serif" font-weight="bold" font-size="20" fill="#a00000">A</text></svg></button><button class="tb" aria-label="Edit"><svg><use href="#ptr"/></svg></button><button class="tb" aria-label="Annotation manager"><svg><use href="#mgr"/></svg></button><button class="tb" aria-label="Legend"><svg><use href="#leg"/></svg></button></div>
</div>
</div>

<main class="d-flex flex-fill position-relative">
  <svg class="redarrow" width="79" height="51"><path d="M2 11H36V3Q37-1 41 2L79 25.500 41 49Q37 52 36 48V39H2Q0 39 0 37V13Q0 11 2 11z" fill="#ed1c24"/></svg>
  <aside class="side d-flex flex-column">
    <div class="tabs d-flex align-items-end"><button class="cur">Model</button><button>Results</button></div>
    <div class="panel d-flex flex-column flex-fill">
      <div class="d-flex align-items-center">
        <div class="pick dbpick"><svg class="ms-1 align-self-center" height="17"><use href="#t-db"/></svg><select aria-label="Tree source"><option>Model Database</option></select><span class="drop"><svg height="6" viewBox="0 0 9 6"><use href="#ch"/></svg></span></div>
        <div class="dbtools d-flex align-items-center justify-content-between flex-fill">
          <svg width="10" height="16"><path d="M5 0l5 6H0zM5 16l5-6H0z" fill="#999"/></svg>
          <svg width="16" height="14"><path d="M.5 2.500h5l1-2h4l1 2h4v10H.5zM5 9.500h5M5.500 10V5M3.500 7l2-2 2 2" fill="none" stroke="#999"/></svg>
          <svg width="16" height="16"><path d="M1.500 1.500h3v3h-3zM6.500 5.500h3v3h-3zM11.500 11.500h3v3h-3zM4 3h4v3M9 7h4v4M3 8v4h7M1 10l2-3 2 3" fill="none" stroke="#999"/></svg>
          <svg width="15" height="15"><path d="M5 9C2 6 5 3 7.500 3S13 6 10 9v2H5z" fill="#f4ea7c" stroke="#222"/><path d="M5 12.500h5M6 14.500h3M0 6h2M13 6h2M2 1l1 1M13 1l-1 1M7.500 0v1M1 11l1-1M14 11l-1-1" stroke="#222"/></svg>
        </div>
      </div>
      <div class="tree flex-fill"><ul>
<li><span class="c v dn"><button class="pm" aria-label="Collapse Models"></button></span><svg><use href="#t-mod"/></svg>Models (1)</li>
<li><span class="c v"></span><span class="c"><button class="pm" aria-label="Collapse Model-1"></button></span><span class="curmodel">Model-1</span></li>
<li><span class="c v"></span><span class="c"></span><span class="c v"><button class="pm plus" aria-label="Expand Parts"></button></span><svg><use href="#t-part"/></svg>Parts (1)</li>
<li><span class="c v"></span><span class="c"></span><span class="c v k"></span><svg><use href="#t-mat"/></svg>Materials</li>
<li><span class="c v"></span><span class="c"></span><span class="c v k"></span><svg><use href="#t-cal"/></svg>Calibrations</li>
<li><span class="c v"></span><span class="c"></span><span class="c v k"></span><svg><use href="#t-sec"/></svg>Sections</li>
<li><span class="c v"></span><span class="c"></span><span class="c v k"></span><svg><use href="#t-pro"/></svg>Profiles</li>
<li><span class="c v"></span><span class="c"></span><span class="c v"><button class="pm plus" aria-label="Expand Assembly"></button></span><svg><use href="#t-mod"/></svg>Assembly</li>
<li><span class="c v"></span><span class="c"></span><span class="c v"><button class="pm plus" aria-label="Expand Steps"></button></span><svg><use href="#t-stp"/></svg>Steps (1)</li>
<li><span class="c v"></span><span class="c"></span><span class="c v k"></span><svg><use href="#t-fld"/></svg>Field Output Requests</li>
<li><span class="c v"></span><span class="c"></span><span class="c v k"></span><svg><use href="#t-his"/></svg>History Output Requests</li>
<li><span class="c v"></span><span class="c"></span><span class="c v k"></span><svg><use href="#t-tim"/></svg>Time Points</li>
<li><span class="c v"></span><span class="c"></span><span class="c v k"></span><svg><use href="#t-ale"/></svg>ALE Adaptive Mesh Constraints</li>
<li><span class="c v"></span><span class="c"></span><span class="c v k"></span><svg><use href="#t-int"/></svg>Interactions</li>
<li><span class="c v"></span><span class="c"></span><span class="c v k"></span><svg><use href="#t-inp"/></svg>Interaction Properties</li>
<li><span class="c v"></span><span class="c"></span><span class="c v k"></span><svg><use href="#t-cc"/></svg>Contact Controls</li>
<li><span class="c v"></span><span class="c"></span><span class="c v k"></span><svg><use href="#t-ci"/></svg>Contact Initializations</li>
<li><span class="c v"></span><span class="c"></span><span class="c v k"></span><svg><use href="#t-cs"/></svg>Contact Stabilizations</li>
<li><span class="c v"></span><span class="c"></span><span class="c v k"></span><svg><use href="#t-con"/></svg>Constraints</li>
<li><span class="c v"></span><span class="c"></span><span class="c v k"></span><svg><use href="#t-cns"/></svg>Connector Sections</li>
<li><span class="c v"></span><span class="c"></span><span class="c v"><button class="pm plus" aria-label="Expand Fields"></button></span><svg><use href="#t-f"/></svg>Fields</li>
<li><span class="c v"></span><span class="c"></span><span class="c v k"></span><svg><use href="#t-amp"/></svg>Amplitudes</li>
<li><span class="c v"></span><span class="c"></span><span class="c v k"></span><svg><use href="#t-ld"/></svg>Loads</li>
<li><span class="c v"></span><span class="c"></span><span class="c v k"></span><svg><use href="#t-bc"/></svg>BCs</li>
<li><span class="c v"></span><span class="c"></span><span class="c v k"></span><svg><use href="#t-pf"/></svg>Predefined Fields</li>
<li><span class="c v"></span><span class="c"></span><span class="c v k"></span><svg><use href="#t-rm"/></svg>Remeshing Rules</li>
<li><span class="c v"></span><span class="c"></span><span class="c v k"></span><svg><use href="#t-opt"/></svg>Optimization Tasks</li>
<li><span class="c v"></span><span class="c"></span><span class="c v up k"></span><svg><use href="#t-sk"/></svg>Sketches</li>
<li><span class="c v k"></span><svg viewBox="0 0 16 16"><use href="#t-ann"/><text x="7" y="8" font-family="Liberation Sans,sans-serif" font-weight="bold" font-style="italic" font-size="9">A</text></svg>Annotations</li>
<li><span class="c v up"><button class="pm" aria-label="Collapse Analysis"></button></span><svg><use href="#t-ana"/></svg>Analysis</li>
<li><span class="c"></span><span class="c v k"></span><svg><use href="#t-job"/></svg>Jobs</li>
<li><span class="c"></span><span class="c v k"></span><svg><use href="#t-adp"/></svg>Adaptivity Processes</li>
<li><span class="c"></span><span class="c v k"></span><svg><use href="#t-coe"/></svg>Co-executions</li>
<li><span class="c"></span><span class="c v up k"></span><svg><use href="#t-opt"/></svg>Optimization Processes</li>
      </ul></div>
    </div>
  </aside>
  <section class="work d-flex flex-column flex-fill ms-1">
    <div class="modbar d-flex align-items-center">
      <label for="mo" class="ml1">Module:</label>
      <div class="pick inset p1"><span class="spin"><button aria-label="Previous module"><svg width="6" height="4" fill="#666"><use href="#up"/></svg></button><button aria-label="Next module"><svg width="6" height="4"><use href="#dw"/></svg></button></span><select id="mo"><option>Part</option></select><span class="drop"><svg width="9" height="6"><use href="#ch"/></svg></span></div>
      <label for="ml" class="ml2">Model:</label>
      <div class="pick inset p2"><span class="spin"><button aria-label="Previous model"><svg width="6" height="4" fill="#777"><use href="#up"/></svg></button><button aria-label="Next model"><svg width="6" height="4" fill="#777"><use href="#dw"/></svg></button></span><select id="ml"><option>Model-1</option></select><span class="drop"><svg width="9" height="6"><use href="#ch"/></svg></span></div>
      <label for="pa" class="ml3">Part:</label>
      <div class="pick inset p2"><span class="spin"><button aria-label="Previous part"><svg width="6" height="4" fill="#777"><use href="#up"/></svg></button><button aria-label="Next part"><svg width="6" height="4" fill="#777"><use href="#dw"/></svg></button></span><select id="pa"><option>Part-1</option></select><span class="drop"><svg width="9" height="6"><use href="#ch"/></svg></span></div>
    </div>
    <div class="d-flex flex-fill">
      <div class="toolbox">
        <div class="d-flex flex-wrap"><button class="tb" aria-label="Create part"><svg><use href="#part"/></svg></button><button class="tb" aria-label="Part manager"><svg><use href="#mgr"/></svg></button><button class="tb" aria-label="Solid extrude"><svg><use href="#extr"/><use href="#tri"/></svg></button><button class="tb" aria-label="Shell extrude"><svg><use href="#shel"/><use href="#tri"/></svg></button><button class="tb" aria-label="Wire"><svg><use href="#wire"/><use href="#tri"/></svg></button><button class="tb" aria-label="Cut extrude"><svg><use href="#pock"/><use href="#tri"/></svg></button><button class="tb" aria-label="Round"><svg><use href="#rnd"/><use href="#tri"/></svg></button><button class="tb" aria-label="Mirror"><svg><use href="#mirr"/></svg></button></div><hr>
        <div class="d-flex flex-wrap"><button class="tb" aria-label="Edit feature"><svg><use href="#rib"/><use href="#tri"/></svg></button><button class="tb" aria-label="Suppress"><svg><use href="#rib2"/><use href="#tri"/></svg></button><button class="tb" aria-label="Delete feature"><svg><use href="#eras"/></svg></button></div><hr>
        <div class="d-flex flex-wrap"><button class="tb" aria-label="Partition edge"><svg><use href="#dp"/><use href="#tri"/></svg></button><button class="tb" aria-label="Partition face"><svg><use href="#lfac"/><use href="#tri"/></svg></button><button class="tb" aria-label="Partition cell"><svg><use href="#cell"/><use href="#tri"/></svg></button><button class="tb" aria-label="Remove faces"><svg><use href="#scis"/></svg></button></div><hr>
        <div class="d-flex flex-wrap"><button class="tb" aria-label="Datum point"><svg><use href="#dpl"/><use href="#tri"/></svg></button><button class="tb" aria-label="Datum axis"><svg><use href="#dax"/><use href="#tri"/></svg></button><button class="tb on" aria-label="Datum plane"><svg><use href="#dof"/><use href="#tri"/></svg></button><button class="tb" aria-label="Datum CSYS"><svg><use href="#dcs"/><use href="#tri"/></svg></button></div><hr>
        <div class="d-flex flex-wrap"><button class="tb" aria-label="Offset faces"><svg><use href="#pat"/><use href="#tri"/></svg></button><button class="tb" aria-label="Repair"><svg><use href="#wav"/><use href="#tri"/></svg></button><button class="tb" aria-label="Erase"><svg><use href="#ers2"/><use href="#tri"/></svg></button><button class="tb" aria-label="Tools"><svg><use href="#tls"/></svg></button></div><hr>
        <div class="d-flex flex-wrap"><button class="tb" aria-label="Midsurface"><svg><use href="#pt2"/></svg></button><button class="tb" aria-label="Assign"><svg><use href="#gpt"/></svg></button></div>
      </div>
      <div class="view flex-fill">
        <svg width="100%" height="100%" viewBox="454 143 813 683" preserveAspectRatio="xMinYMin meet">
          <polygon points="559.500,652.500 793,772.500 1113.500,340 880,220" fill="#f0f0f0" stroke="#111"/>
          <g id="comb" stroke="#151515" stroke-width=".9" stroke-linejoin="round"></g>
          <g stroke="#d9c8fa" stroke-width="2" stroke-linejoin="round">
            <path d="M1181 201Q1191 188 1200 186Q1205 187 1208 192Q1223 200 1222 215Q1221 226 1216 233L1187 218z" fill="#145a66"/>
            <path d="M1152 223Q1163 224 1175 233Q1189 243 1192 253Q1193 258 1188 258L1158 242z" fill="#00005c"/>
            <path d="M1174 235L1212 184"/></g>
          <circle cx="1212" cy="184" r="3.500" fill="#d9c8fa"/><path d="M1166 236h9v9h-9z" fill="#d00"/>
          <g fill="#e8e020" font-family="Liberation Sans,sans-serif" font-size="9"><text x="1214" y="178">Y</text><text x="1177" y="198">Z</text><text x="1220" y="240">X</text></g>
          <path d="M521 762L534 745" stroke="#0b0" stroke-width="4"/><path d="M542 733L528 741 538 748z" fill="#0a0"/>
          <path d="M520 764L541 775" stroke="#c00" stroke-width="4"/><path d="M552 780L541 769 537 780z" fill="#a00000"/>
          <path d="M515 751L519 764" stroke="#00008a" stroke-width="4"/><circle cx="514.500" cy="750" r="6" fill="#0000b8"/>
          <g fill="#fff" font-family="DejaVu Sans,sans-serif" font-size="14"><text x="505" y="739">Z</text><text x="544" y="725">Y</text><text x="560" y="791">X</text></g>
          <path d="M652 744h24q2 0 2 2v34h9q4 1 2 5L665 822 640 785q-2-4 2-5h8v-34q0-2 2-2z" fill="#ed1c24"/>
        </svg>
      </div>
    </div>
    <div class="prompt d-flex align-items-center">
      <button class="pb sq dim" aria-label="Back"><svg width="14" height="12"><path d="M0 6l6-5v3h8v4H6v3z" fill="#999"/></svg></button>
      <button class="pb sq stop" aria-label="Cancel"><svg width="12" height="12"><path d="M1 1l10 10M10 1L2 11" stroke="#f00000" stroke-width="2"/></svg></button>
      <span class="ptext">Principal plane from which to offset:</span>
      <div class="pbs d-flex"><button class="pb on">XY Plane</button><button class="pb">YZ Plane</button><button class="pb">XZ Plane</button></div>
      <svg class="ms-auto" width="105" height="26" viewBox="0 0 105 26"><g fill="none" stroke="#0c7a9c" stroke-width="1.500"><path d="M5 5c6-4 9-3 7 0s-6 4-6 4c6 0 5 4 1 8-3 2-5 2-6 1"/><path d="M19 3c-4 4-3 6 0 9s0 8-7 9M11 21c3-6 6-9 8-9"/></g><text x="25" y="23" font-family="DejaVu Sans,sans-serif" font-style="italic" font-weight="bold" font-size="16" fill="#0c7a9c">SIMULIA</text></svg>
    </div>
  </section>
</main>
<script>
// Honeycomb core: walls of height h over a rectangular plate, drawn back to front.
(function () {
  var h = [8.9, 28.6], P = [874.5, 214.3], W = [40.7, 20.96], L = [-48.1, 64.95];
  var e1 = [28.9, -0.4], e3 = [11.8, 21.3], e2 = [-15.5, 21.6];
  var O = [550.9, 623.7], U = [233.5, 119.7], V = [320.3, -432.7];
  var det = U[0] * V[1] - U[1] * V[0], walls = [];
  function uv(p) { var x = p[0] - O[0], y = p[1] - O[1]; return [(x * V[1] - y * V[0]) / det, (U[0] * y - U[1] * x) / det]; }
  function add(a, d, fill) {
    var s = uv(a), e = uv([a[0] + d[0], a[1] + d[1]]), t0 = 0, t1 = 1;
    for (var k = 0; k < 2; k++) {
      var g = e[k] - s[k];
      if (Math.abs(g) < 1e-6) { if (s[k] < 0 || s[k] > 1) return; continue; }
      var p = -s[k] / g, q = (1 - s[k]) / g;
      t0 = Math.max(t0, Math.min(p, q)); t1 = Math.min(t1, Math.max(p, q));
    }
    if (t1 - t0 < 0.03) return;
    var A = [a[0] + d[0] * t0, a[1] + d[1] * t0], B = [a[0] + d[0] * t1, a[1] + d[1] * t1];
    walls.push({ z: (A[0] + B[0]) * h[0] + (A[1] + B[1]) * h[1], f: fill, A: A, B: B });
  }
  for (var i = -8; i < 16; i++) for (var j = -4; j < 20; j++) {
    var o = j % 2 ? 0.5 : 0, a = [P[0] + W[0] * (i + o) + L[0] * j / 2, P[1] + W[1] * (i + o) + L[1] * j / 2];
    add(a, e1, '#a8a8a8'); add(a, e2, '#8b8b8b'); add(a, [-e3[0], -e3[1]], '#dedede');
  }
  walls.sort(function (p, q) { return p.z - q.z; });
  function pt(p, k) { return (p[0] + k * h[0]).toFixed(1) + ',' + (p[1] + k * h[1]).toFixed(1); }
  document.getElementById('comb').innerHTML = walls.map(function (w) {
    return '<polygon fill="' + w.f + '" points="' + [pt(w.A, 0), pt(w.B, 0), pt(w.B, 1), pt(w.A, 1)].join(' ') + '"/>';
  }).join('');
})();
</script>
<script src="https://cdn.jsdelivr.net/npm/bootstrap@5.3.0/dist/js/bootstrap.bundle.min.js"></script>
</body>
</html>
